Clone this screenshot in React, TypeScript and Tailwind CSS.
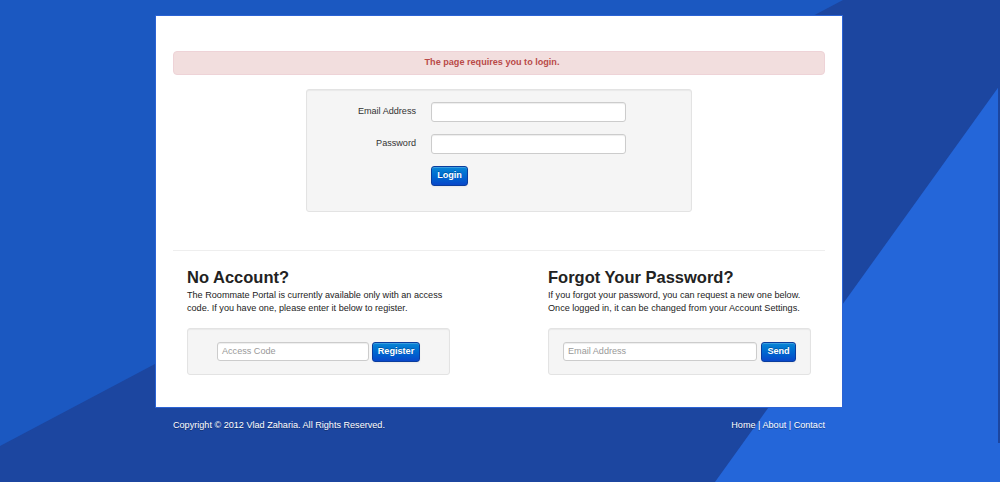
import React from "react";

const font = "font-['Liberation_Sans',Arial,Helvetica,sans-serif]";

function Btn({ label, w }: { label: string; w: string }) {
  return (
    <button
      className={`${w} h-[20px] shrink-0 rounded-[3px] border border-[#0a3d9e] bg-gradient-to-b from-[#0a86d6] to-[#0a47c9] text-[9.1px] font-bold leading-none text-white [text-shadow:0_-1px_0_rgba(0,0,0,0.25)] shadow-[inset_0_1px_0_rgba(255,255,255,0.2),0_1px_2px_rgba(0,0,0,0.05)]`}
    >
      {label}
    </button>
  );
}

function Input({ w, h = "h-[20px]", placeholder }: { w: string; h?: string; placeholder?: string }) {
  return (
    <div
      className={`${w} ${h} flex items-center rounded-[3px] border border-[#cccccc] bg-white pl-[4px] text-[9.1px] text-[#999999] shadow-[inset_0_1px_1px_rgba(0,0,0,0.075)]`}
    >
      {placeholder}
    </div>
  );
}

export default function App() {
  return (
    <div className={`relative h-[482px] w-full overflow-hidden bg-[#1b58c1] ${font}`}>
      <svg
        className="absolute inset-0 h-full w-full"
        viewBox="0 0 1000 482"
        preserveAspectRatio="none"
      >
        <polygon points="0,446 843,0 1000,0 1000,482 0,482" fill="#1c46a0" />
        <polygon points="1000,85 1000,482 715,482" fill="#2466d9" />
        <rect x="998" y="0" width="2" height="443" fill="#1c46a0" />
      </svg>

      <div className="relative flex flex-col items-start pl-[155px] pt-[15px]">
        <div className="w-[688px] border border-[#2b63d4] bg-white px-[17px] pt-[35px] pb-[32px]">
          <div className="flex h-[24px] items-center justify-center rounded-[4px] border border-[#eed3d7] bg-[#f2dede] pl-[10px] pr-[24px] text-[9.1px] font-bold text-[#b94a48]">
            The page requires you to login.
          </div>

          <div className="mx-auto mt-[14px] h-[123px] w-[386px] rounded-[3px] border border-[#e3e3e3] bg-[#f5f5f5] pt-[12px] shadow-[inset_0_1px_1px_rgba(0,0,0,0.05)]">
            <div className="flex flex-col gap-[12px]">
              <div className="flex items-center">
                <div className="w-[109px] text-right text-[9.1px] text-[#333333]">Email Address</div>
                <div className="ml-[15px]">
                  <Input w="w-[195px]" />
                </div>
              </div>
              <div className="flex items-center">
                <div className="w-[109px] text-right text-[9.1px] text-[#333333]">Password</div>
                <div className="ml-[15px]">
                  <Input w="w-[195px]" />
                </div>
              </div>
              <div className="flex items-center pl-[124px]">
                <Btn label="Login" w="w-[37px]" />
              </div>
            </div>
          </div>

          <div className="mt-[38px] h-[2px] border-t border-b border-t-[#eeeeee] border-b-white" />

          <div className="flex justify-between px-[14px] pt-[15px]">
            <div className="w-[263px]">
              <h3 className="text-[16.5px] font-bold leading-[20px] text-[#222222]">No Account?</h3>
              <p className="mt-[2px] text-[9.1px] leading-[13px] text-[#222222]">
                The Roommate Portal is currently available only with an access code. If you have one, please enter it below to register.
              </p>
              <div className="mt-[13px] flex h-[47px] items-center justify-center gap-[3px] rounded-[3px] border border-[#e3e3e3] bg-[#f5f5f5] shadow-[inset_0_1px_1px_rgba(0,0,0,0.05)]">
                <Input w="w-[152px]" h="h-[19px]" placeholder="Access Code" />
                <Btn label="Register" w="w-[48px]" />
              </div>
            </div>
            <div className="w-[263px]">
              <h3 className="text-[16.5px] font-bold leading-[20px] text-[#222222]">Forgot Your Password?</h3>
              <p className="mt-[2px] text-[9.1px] leading-[13px] text-[#222222]">
                If you forgot your password, you can request a new one below. Once logged in, it can be changed from your Account Settings.
              </p>
              <div className="mt-[13px] flex h-[47px] items-center justify-center gap-[4px] rounded-[3px] border border-[#e3e3e3] bg-[#f5f5f5] shadow-[inset_0_1px_1px_rgba(0,0,0,0.05)]">
                <Input w="w-[194px]" h="h-[19px]" placeholder="Email Address" />
                <Btn label="Send" w="w-[35px]" />
              </div>
            </div>
          </div>
        </div>

        <div className="ml-[18px] mt-[11px] flex w-[652px] justify-between text-[9.1px] leading-[13px] text-white [text-shadow:0_1px_0_rgba(0,0,0,0.35)]">
          <span>Copyright © 2012 Vlad Zaharia. All Rights Reserved.</span>
          <span>Home | About | Contact</span>
        </div>
      </div>
    </div>
  );
}
